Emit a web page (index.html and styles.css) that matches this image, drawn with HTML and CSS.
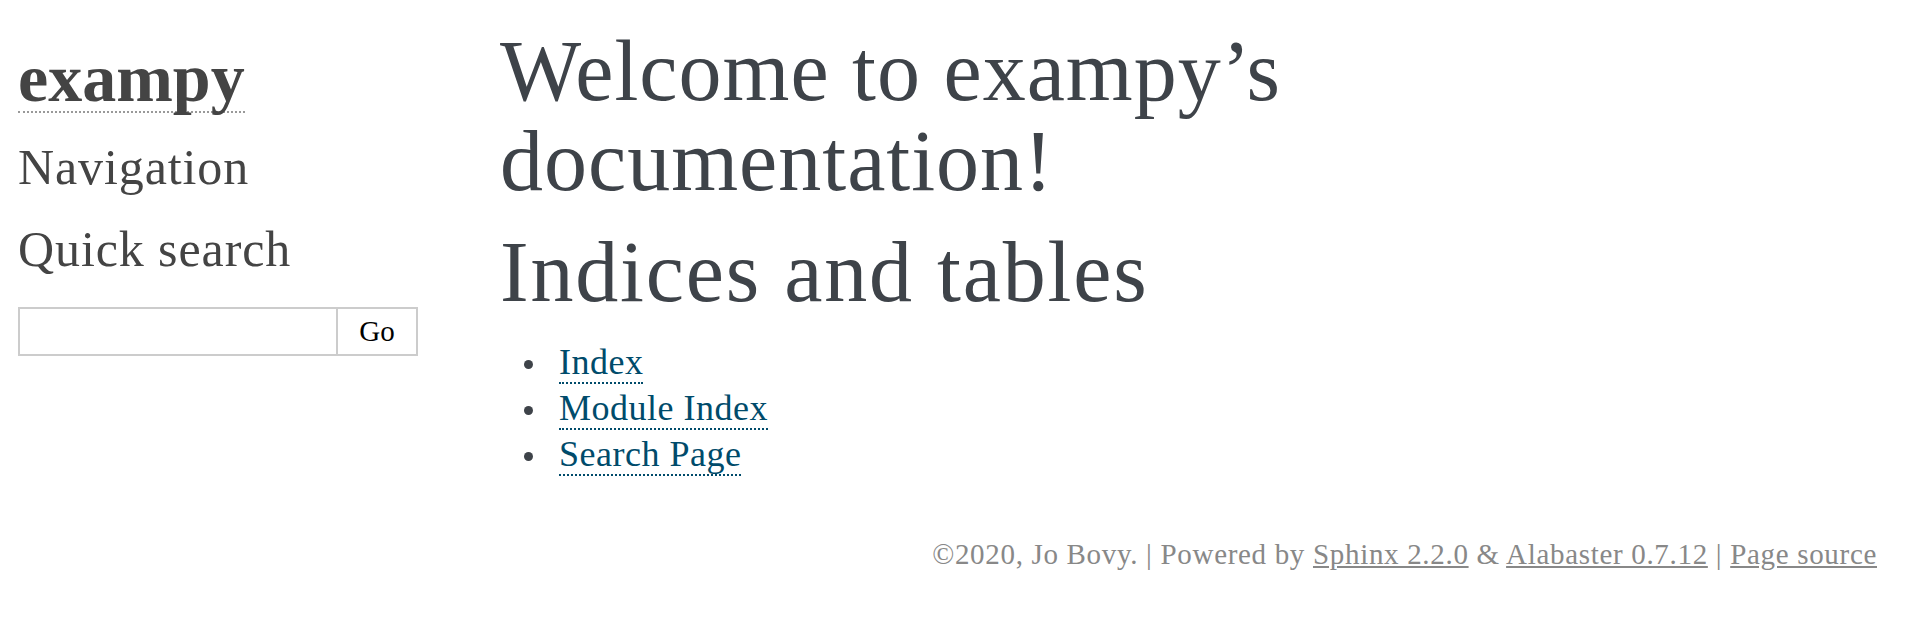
FILE: index.html
```html
<!DOCTYPE html>
<html lang="en">
<head>
<meta charset="utf-8">
<title>Welcome to exampy’s documentation! — exampy</title>
<link rel="stylesheet" href="styles.css">
</head>
<body>
<div class="document">
  <div class="sidebar">
    <h1 class="logo"><a href="#">exampy</a></h1>
    <h3 class="side-title nav-title">Navigation</h3>
    <h3 class="side-title search-title">Quick search</h3>
    <form class="searchbox" onsubmit="return false;">
      <input type="text" class="search-input" name="q" aria-label="search">
      <input type="submit" class="search-go" value="Go">
    </form>
  </div>
  <div class="body">
    <h1 class="title">Welcome to exampy’s documentation!</h1>
    <h1 class="section">Indices and tables</h1>
    <ul class="indices">
      <li><a href="#" class="ref">Index</a></li>
      <li><a href="#" class="ref">Module Index</a></li>
      <li><a href="#" class="ref">Search Page</a></li>
    </ul>
  </div>
</div>
<div class="footer">©2020, Jo Bovy. | Powered by <a href="#">Sphinx 2.2.0</a> &amp; <a href="#">Alabaster 0.7.12</a> | <a href="#">Page source</a></div>
</body>
</html>
```

FILE: styles.css
```css
html, body {
  margin: 0;
  padding: 0;
  background: #fff;
}
body {
  font-family: "Liberation Serif", "Times New Roman", serif;
  color: #3E4349;
}
.document {
  display: flex;
  align-items: flex-start;
}
.sidebar {
  flex: none;
  width: 500px;
  box-sizing: border-box;
  padding: 44.5px 0 0 18px;
  color: #444;
}
.logo {
  display: flex;
  margin: 0;
  font-size: 68px;
  font-weight: bold;
}
.logo a {
  color: #444;
  text-decoration: none;
  line-height: 66.5px;
  border-bottom: 2px dotted #999;
}
.side-title {
  margin: 0;
  font-weight: normal;
  font-size: 50px;
  line-height: 60px;
  letter-spacing: 0.9px;
  color: #444;
}
.nav-title {
  margin-top: 24px;
}
.search-title {
  margin-top: 21.7px;
}
.searchbox {
  display: flex;
  margin: 28.4px 0 0 0;
}
.search-input {
  width: 320px;
  height: 49px;
  box-sizing: border-box;
  margin: 0;
  padding: 0 8px;
  border: 2px solid #ccc;
  border-radius: 0;
  background: #fff;
  font-family: inherit;
  font-size: 29px;
  outline: none;
}
.search-go {
  width: 80px;
  height: 49px;
  box-sizing: border-box;
  margin: 0;
  padding: 0;
  border: 2px solid #ccc;
  border-left: none;
  border-radius: 0;
  background: #fff;
  color: #000;
  font-family: inherit;
  font-size: 29px;
  -webkit-appearance: none;
  appearance: none;
}
.body {
  width: 1100px;
  padding-top: 25.5px;
}
.title, .section {
  margin: 0;
  font-weight: normal;
  font-size: 86px;
  line-height: 90px;
  letter-spacing: 1px;
  color: #3E4349;
}
.section {
  letter-spacing: 1.8px;
}
.title {
  margin-bottom: 21.3px;
}
.section {
  margin-bottom: 21.8px;
}
.indices {
  margin: 0;
  padding: 0 0 0 59px;
  list-style: none;
}
.indices li {
  font-size: 36px;
  line-height: 46px;
  letter-spacing: 0.5px;
  color: #3E4349;
}
.indices li::before {
  content: "";
  display: inline-block;
  width: 9px;
  height: 9px;
  border-radius: 50%;
  background: #3E4349;
  margin-left: -35px;
  margin-right: 26px;
  vertical-align: 4.2px;
}
.ref {
  color: #004B6B;
  text-decoration: none;
  border-bottom: 2px dotted #004B6B;
}
.footer {
  margin-top: 57px;
  padding-right: 45px;
  text-align: right;
  font-size: 29px;
  line-height: 40px;
  letter-spacing: 0.68px;
  color: #888;
}
.footer a {
  color: #888;
  text-decoration: underline;
}
```
